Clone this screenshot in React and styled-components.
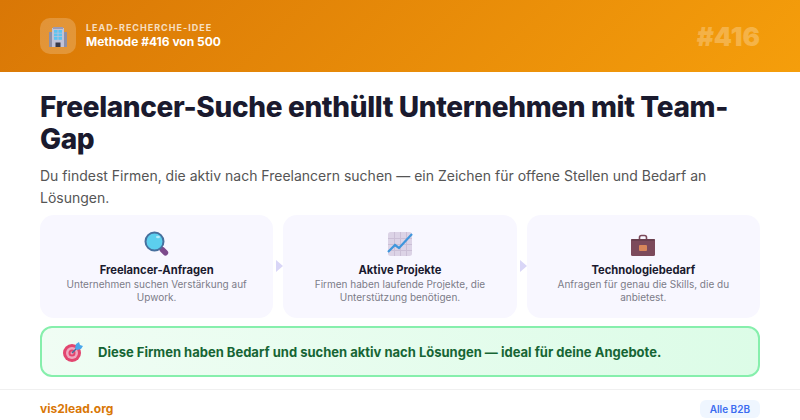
import React from 'react';
import styled, { createGlobalStyle } from 'styled-components';

const GlobalStyle = createGlobalStyle`
  html, body {
    margin: 0;
    padding: 0;
    background: #fff;
    font-family: Inter, 'Liberation Sans', sans-serif;
  }
  * { box-sizing: border-box; }
`;

const Page = styled.div`
  width: 800px;
  height: 420px;
  overflow: hidden;
  display: flex;
  flex-direction: column;
`;

const Header = styled.header`
  height: 72px;
  flex: none;
  padding: 0 40px;
  display: flex;
  align-items: center;
  justify-content: space-between;
  background: linear-gradient(135deg, #d97706 0%, #f59e0b 100%);
`;

const Brand = styled.div`
  display: flex;
  align-items: center;
  gap: 10px;
`;

const IconTile = styled.div`
  width: 36px;
  height: 36px;
  border-radius: 10px;
  background: rgba(255, 255, 255, 0.2);
  display: flex;
  align-items: center;
  justify-content: center;
`;

const Eyebrow = styled.div`
  font-size: 9px;
  line-height: 12px;
  font-weight: 700;
  letter-spacing: 1px;
  color: rgba(255, 255, 255, 0.75);
`;

const Method = styled.div`
  font-size: 12px;
  line-height: 16px;
  font-weight: 700;
  color: #fff;
`;

const BigNumber = styled.div`
  font-size: 26px;
  font-weight: 900;
  color: rgba(255, 255, 255, 0.25);
`;

const Main = styled.main`
  flex: 1;
  padding: 19px 40px 0;
`;

const Title = styled.h1`
  margin: 0;
  font-size: 28px;
  line-height: 32px;
  font-weight: 800;
  letter-spacing: -0.35px;
  color: #1a1a2e;
`;

const Lead = styled.p`
  margin: 10px 0 0;
  font-size: 14px;
  line-height: 22px;
  color: #555;
`;

const Steps = styled.div`
  margin-top: 6px;
  display: grid;
  grid-template-columns: repeat(3, 1fr);
  gap: 10px;
`;

const Step = styled.div`
  position: relative;
  height: 103px;
  padding: 16px 16px 0;
  border-radius: 14px;
  background: #f8f7ff;
  text-align: center;

  &:not(:last-child)::after {
    content: '';
    position: absolute;
    top: 45px;
    right: -10px;
    border-left: 7px solid #d9d6f7;
    border-top: 6px solid transparent;
    border-bottom: 6px solid transparent;
  }
`;

const StepIcon = styled.div`
  height: 26px;
  display: flex;
  justify-content: center;
`;

const StepTitle = styled.div`
  margin-top: 6px;
  font-size: 11.2px;
  line-height: 14px;
  font-weight: 700;
  color: #1a1a2e;
`;

const StepText = styled.div`
  margin-top: 1px;
  font-size: 10px;
  line-height: 13px;
  color: #7c7c88;
`;

const Callout = styled.div`
  margin-top: 8px;
  height: 51px;
  padding: 0 20px;
  display: flex;
  align-items: center;
  gap: 14px;
  border: 2px solid #86efac;
  border-radius: 12px;
  background: linear-gradient(90deg, #f0fdf4, #dcfce7);
`;

const CalloutText = styled.div`
  font-size: 13px;
  font-weight: 700;
  color: #166534;
`;

const Footer = styled.footer`
  height: 31px;
  flex: none;
  padding: 7px 40px 0;
  border-top: 1px solid #f0f0f0;
  display: flex;
  align-items: center;
  justify-content: space-between;
`;

const Site = styled.div`
  font-size: 12px;
  font-weight: 700;
  color: #d97706;
`;

const Badge = styled.div`
  padding: 3px 10px;
  border-radius: 6px;
  background: #eff6ff;
  font-size: 10px;
  line-height: 12px;
  font-weight: 600;
  color: #3b6cf0;
`;

const BuildingIcon = () => (
  <svg width="24" height="24" viewBox="0 0 24 24">
    <rect x="3" y="8" width="18" height="15" fill="#8d90a8" />
    <rect x="6" y="4" width="12" height="19" fill="#c2c3d6" />
    <rect x="7" y="3" width="10" height="2" fill="#9a9bb5" />
    {[6, 9.5, 13].map(y => (
      <g key={y}>
        <rect x="8" y={y} width="3.6" height="2.8" fill="#5cc4f0" />
        <rect x="12.4" y={y} width="3.6" height="2.8" fill="#5cc4f0" />
      </g>
    ))}
    <rect x="9.5" y="18.5" width="5" height="4.5" fill="#3a3a48" />
  </svg>
);

const SearchIcon = () => (
  <svg width="26" height="26" viewBox="0 0 26 26">
    <rect x="15" y="17.5" width="10" height="5.5" rx="2.7" fill="#7d4a8c" transform="rotate(45 20 20)" />
    <circle cx="10.5" cy="10.5" r="9" fill="#5ccfee" stroke="#47709e" strokeWidth="2" />
    <ellipse cx="14" cy="6" rx="2" ry="1.3" fill="#b5ecfa" />
  </svg>
);

const ChartIcon = () => (
  <svg width="26" height="26" viewBox="0 0 26 26">
    <rect x="1" y="1" width="24" height="24" rx="2.5" fill="#dcd3e6" />
    <path d="M1 7.5h24M1 13.5h24M1 19.5h24M7.5 1v24M13.5 1v24M19.5 1v24" stroke="#cbbfd6" strokeWidth="1" />
    <path d="M1 21l7-7 4 3 13-14" fill="none" stroke="#3f96dc" strokeWidth="2.2" />
  </svg>
);

const BriefcaseIcon = () => (
  <svg width="26" height="26" viewBox="0 0 26 26">
    <path d="M9.5 9V6.5A2 2 0 0 1 11.5 4.5h3a2 2 0 0 1 2 2V9" fill="none" stroke="#7c4a5b" strokeWidth="1.6" />
    <rect x="1" y="8" width="24" height="17" rx="1.5" fill="#7c4a5b" />
    <rect x="1" y="8" width="24" height="2" rx="1" fill="#6a3f4e" />
    <rect x="9" y="14" width="8" height="6" rx="1" fill="#d9865a" />
  </svg>
);

const TargetIcon = () => (
  <svg width="22" height="22" viewBox="0 0 22 22">
    <circle cx="10" cy="12" r="9" fill="#e2456f" />
    <circle cx="10" cy="12" r="6" fill="#f0a8c0" />
    <circle cx="10" cy="12" r="3.5" fill="#e2456f" />
    <circle cx="10" cy="12" r="1.5" fill="#f0a8c0" />
    <path d="M10 12l7-7" stroke="#3f6e9e" strokeWidth="1.4" />
    <path d="M13 7l1-4 3-2 1 3 3 1-2 3-4 1z" fill="#4aa8ec" />
  </svg>
);

const steps = [
  { icon: <SearchIcon />, title: 'Freelancer-Anfragen', text: 'Unternehmen suchen Verstärkung auf Upwork.' },
  { icon: <ChartIcon />, title: 'Aktive Projekte', text: 'Firmen haben laufende Projekte, die Unterstützung benötigen.' },
  { icon: <BriefcaseIcon />, title: 'Technologiebedarf', text: 'Anfragen für genau die Skills, die du anbietest.' }
];

function App() {
  return (
    <Page>
      <GlobalStyle />
      <Header>
        <Brand>
          <IconTile><BuildingIcon /></IconTile>
          <div>
            <Eyebrow>LEAD-RECHERCHE-IDEE</Eyebrow>
            <Method>Methode #416 von 500</Method>
          </div>
        </Brand>
        <BigNumber>#416</BigNumber>
      </Header>
      <Main>
        <Title>Freelancer-Suche enthüllt Unternehmen mit Team-Gap</Title>
        <Lead>Du findest Firmen, die aktiv nach Freelancern suchen — ein Zeichen für offene Stellen und Bedarf an Lösungen.</Lead>
        <Steps>
          {steps.map(step => (
            <Step key={step.title}>
              <StepIcon>{step.icon}</StepIcon>
              <StepTitle>{step.title}</StepTitle>
              <StepText>{step.text}</StepText>
            </Step>
          ))}
        </Steps>
        <Callout>
          <TargetIcon />
          <CalloutText>Diese Firmen haben Bedarf und suchen aktiv nach Lösungen — ideal für deine Angebote.</CalloutText>
        </Callout>
      </Main>
      <Footer>
        <Site>vis2lead.org</Site>
        <Badge>Alle B2B</Badge>
      </Footer>
    </Page>
  );
}

export default App;
